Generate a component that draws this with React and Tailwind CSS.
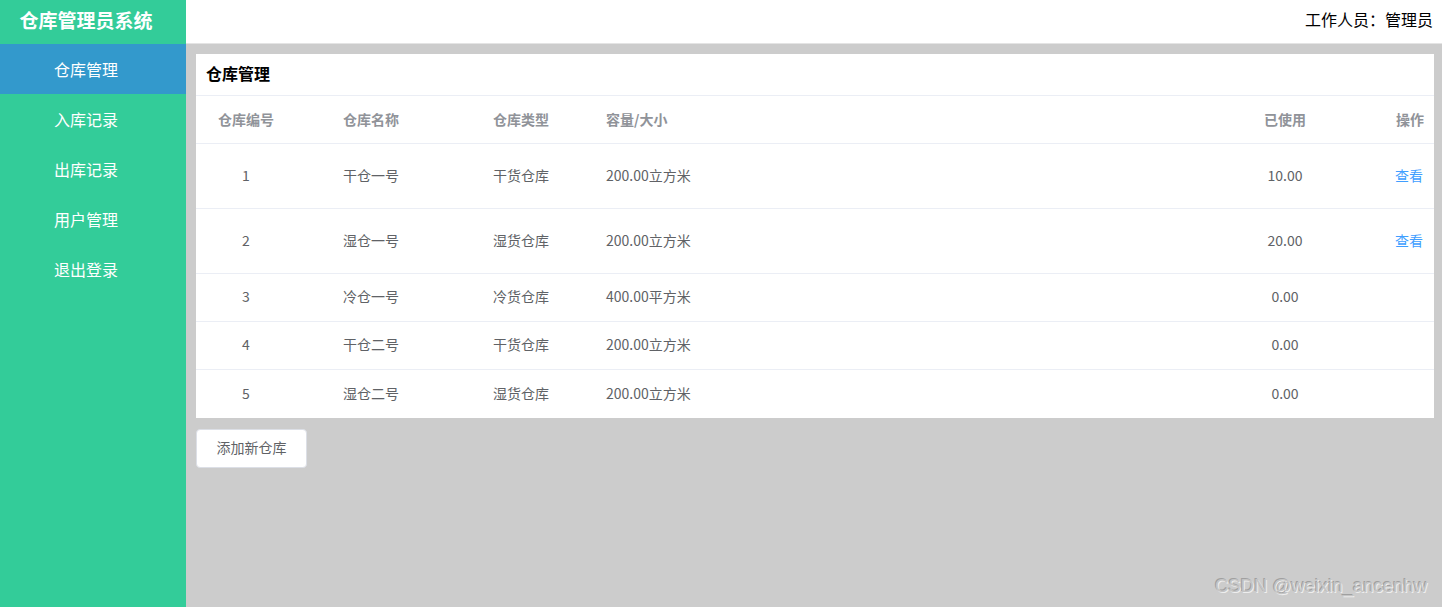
import React from 'react';

const menus = ['仓库管理', '入库记录', '出库记录', '用户管理', '退出登录'];

const rows = [
  { id: 1, name: '干仓一号', type: '干货仓库', size: '200.00立方米', used: '10.00', view: true },
  { id: 2, name: '湿仓一号', type: '湿货仓库', size: '200.00立方米', used: '20.00', view: true },
  { id: 3, name: '冷仓一号', type: '冷货仓库', size: '400.00平方米', used: '0.00', view: false },
  { id: 4, name: '干仓二号', type: '干货仓库', size: '200.00立方米', used: '0.00', view: false },
  { id: 5, name: '湿仓二号', type: '湿货仓库', size: '200.00立方米', used: '0.00', view: false },
];

const cols = 'grid grid-cols-[137px_150px_113px_1fr_100px_99px] items-center';

export default function App() {
  return (
    <div className="relative flex h-[607px] w-full overflow-hidden font-['Microsoft_YaHei','Noto_Sans_CJK_SC',sans-serif]">
      {/* 左侧菜单 */}
      <aside className="flex w-[186px] shrink-0 flex-col bg-[#33cc99]">
        <div className="flex h-[44px] items-center justify-center pr-[14px] pb-[4px] text-[19px] font-bold text-white">仓库管理员系统</div>
        {menus.map((m, i) => (
          <div
            key={m}
            className={`flex h-[50px] items-center pl-[54px] text-[16px] text-white ${i === 0 ? 'bg-[#3399cc]' : ''}`}
          >
            {m}
          </div>
        ))}
      </aside>

      <div className="flex min-w-0 flex-1 flex-col">
        {/* 顶部 */}
        <header className="flex h-[44px] shrink-0 items-center justify-end border-b border-[#e4e4e4] bg-white pr-[9px] pb-[5px] text-[16px] text-black">
          工作人员：管理员
        </header>

        <main className="flex-1 bg-[#cccccc] pl-[10px] pr-[8px] pt-[10px]">
          <div className="bg-white">
            <div className="flex h-[42px] items-center border-b border-[#ebeef5] pl-[10px] pb-[3px] text-[16px] font-bold text-black">仓库管理</div>
            <div className={`${cols} h-[48px] border-b border-[#ebeef5] text-[14px] font-bold text-[#909399]`}>
              <div className="w-[100px] text-center">仓库编号</div>
              <div className="pl-[10px]">仓库名称</div>
              <div className="pl-[10px]">仓库类型</div>
              <div className="pl-[10px]">容量/大小</div>
              <div className="text-center">已使用</div>
              <div className="pr-[10px] text-right">操作</div>
            </div>
            {rows.map((r, i) => (
              <div
                key={r.id}
                className={`${cols} ${r.view ? 'h-[65px]' : 'h-[48px]'} ${i < rows.length - 1 ? 'border-b border-[#ebeef5]' : ''} pb-[2px] text-[14px] text-[#606266]`}
              >
                <div className="w-[100px] text-center">{r.id}</div>
                <div className="pl-[10px]">{r.name}</div>
                <div className="pl-[10px]">{r.type}</div>
                <div className="pl-[10px]">{r.size}</div>
                <div className="text-center">{r.used}</div>
                <div className="pr-[11px] text-right text-[#409eff]">{r.view ? '查看' : ''}</div>
              </div>
            ))}
          </div>

          <button className="mt-[11px] h-[39px] w-[111px] rounded-[4px] border border-[#dcdfe6] bg-white pb-[2px] text-[14px] text-[#606266]">
            添加新仓库
          </button>
        </main>
      </div>

      {/* 水印 */}
      <div className="absolute bottom-[7px] right-[15px] font-['Liberation_Sans',sans-serif] text-[18.5px] text-[#c4c4c4] [text-shadow:1px_1px_0_#eeeeee,-1px_-1px_0_#a0a0a0]">
        CSDN @weixin_ancenhw
      </div>
    </div>
  );
}
